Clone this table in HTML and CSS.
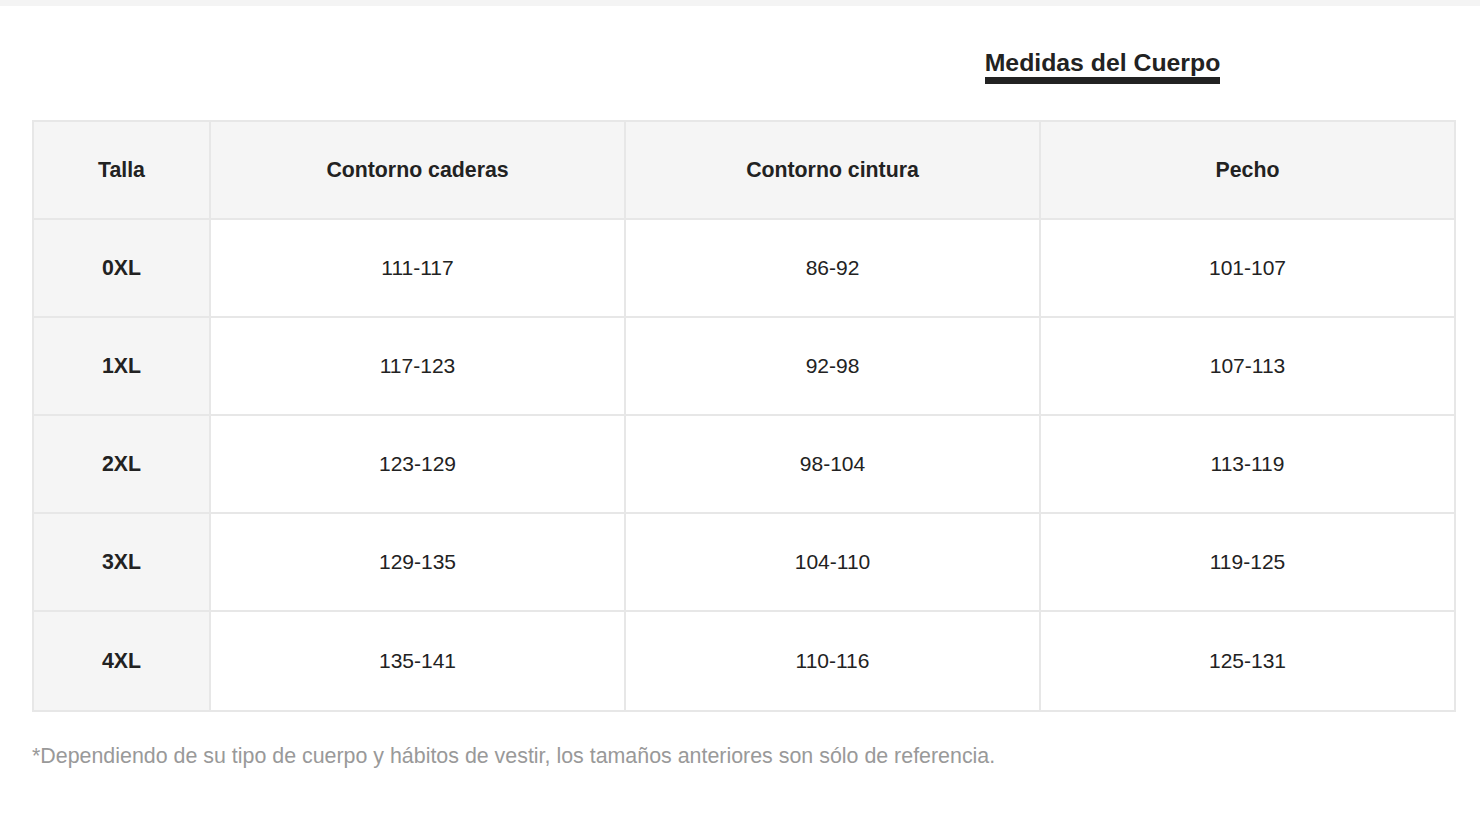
FILE: index.html
```html
<!DOCTYPE html>
<html lang="es">
<head>
<meta charset="utf-8">
<title>Medidas del Cuerpo</title>
<link rel="stylesheet" href="styles.css">
</head>
<body>
<div class="topband"></div>
<main class="page">
  <nav class="tabs">
    <div class="tab"></div>
    <div class="tab tab-active"><span class="tab-label">Medidas del Cuerpo</span></div>
  </nav>
  <table class="sizes">
    <colgroup>
      <col class="col-size">
      <col class="col-val">
      <col class="col-val">
      <col class="col-val">
    </colgroup>
    <thead>
      <tr>
        <th>Talla</th>
        <th>Contorno caderas</th>
        <th>Contorno cintura</th>
        <th>Pecho</th>
      </tr>
    </thead>
    <tbody>
      <tr><th>0XL</th><td>111-117</td><td>86-92</td><td>101-107</td></tr>
      <tr><th>1XL</th><td>117-123</td><td>92-98</td><td>107-113</td></tr>
      <tr><th>2XL</th><td>123-129</td><td>98-104</td><td>113-119</td></tr>
      <tr><th>3XL</th><td>129-135</td><td>104-110</td><td>119-125</td></tr>
      <tr class="last"><th>4XL</th><td>135-141</td><td>110-116</td><td>125-131</td></tr>
    </tbody>
  </table>
  <p class="note">*Dependiendo de su tipo de cuerpo y hábitos de vestir, los tamaños anteriores son sólo de referencia.</p>
</main>
</body>
</html>
```
FILE: styles.css
```css
html, body {
  margin: 0;
  padding: 0;
  background: #fff;
}
body {
  font-family: "Liberation Sans", Arial, Helvetica, sans-serif;
  color: #222;
}
.topband {
  height: 6px;
  background: #f4f4f4;
}
.page {
  padding: 0 26px 0 32px;
}
.tabs {
  display: flex;
  margin-top: 42px;
  height: 36px;
  margin-bottom: 36px;
}
.tab {
  flex: 1;
  display: flex;
  justify-content: center;
}
.tab-active {
  padding-left: 16px;
}
.tab-label {
  font-size: 24.8px;
  font-weight: bold;
  line-height: 29px;
  color: #222;
  border-bottom: 7px solid #222;
  height: 29px;
}
.sizes {
  width: 1422px;
  table-layout: fixed;
  border-collapse: collapse;
}
.col-size { width: 177px; }
.col-val { width: 415px; }
.sizes th,
.sizes td {
  border: 2px solid #e7e7e7;
  height: 96px;
  padding: 0;
  text-align: center;
  vertical-align: middle;
}
.sizes thead th {
  background: #f5f5f5;
  font-size: 21.3px;
  font-weight: bold;
}
.sizes tbody th {
  background: #f5f5f5;
  font-size: 21.3px;
  font-weight: bold;
}
.sizes td {
  font-size: 21px;
  font-weight: normal;
  color: #222;
}
.sizes tr.last th,
.sizes tr.last td {
  height: 98px;
}
.note {
  margin: 31px 0 0;
  font-size: 21.4px;
  line-height: 26px;
  color: #999;
}
```
